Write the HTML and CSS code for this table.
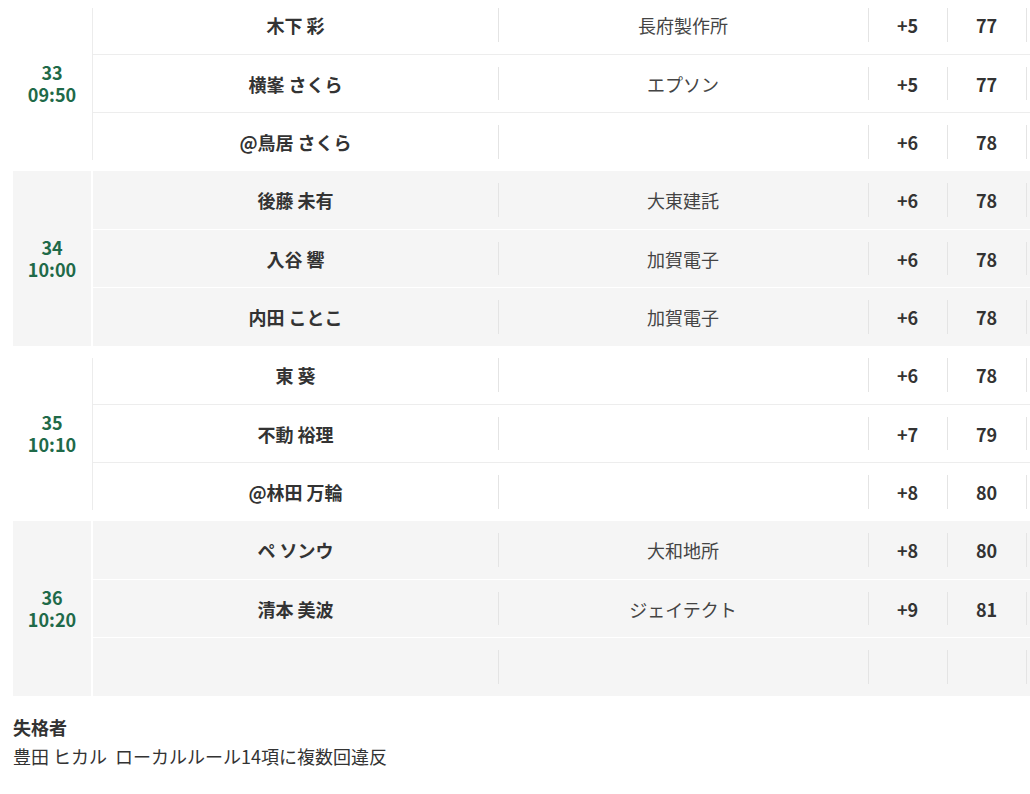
FILE: index.html
```html
<!DOCTYPE html>
<html lang="ja">
<head>
<meta charset="utf-8">
<title>組み合わせ</title>
<link rel="stylesheet" href="styles.css">
</head>
<body>
<div class="table">
  <div class="group">
    <div class="time"><span>33</span><span>09:50</span></div>
    <div class="rows">
      <div class="row"><div class="c name">木下 彩</div><div class="c co">長府製作所</div><div class="c num">+5</div><div class="c num">77</div><div class="c ex"></div></div>
      <div class="row"><div class="c name">横峯 さくら</div><div class="c co">エプソン</div><div class="c num">+5</div><div class="c num">77</div><div class="c ex"></div></div>
      <div class="row"><div class="c name">@鳥居 さくら</div><div class="c co"></div><div class="c num">+6</div><div class="c num">78</div><div class="c ex"></div></div>
    </div>
  </div>
  <div class="group alt">
    <div class="time"><span>34</span><span>10:00</span></div>
    <div class="rows">
      <div class="row"><div class="c name">後藤 未有</div><div class="c co">大東建託</div><div class="c num">+6</div><div class="c num">78</div><div class="c ex"></div></div>
      <div class="row"><div class="c name">入谷 響</div><div class="c co">加賀電子</div><div class="c num">+6</div><div class="c num">78</div><div class="c ex"></div></div>
      <div class="row"><div class="c name">内田 ことこ</div><div class="c co">加賀電子</div><div class="c num">+6</div><div class="c num">78</div><div class="c ex"></div></div>
    </div>
  </div>
  <div class="group">
    <div class="time"><span>35</span><span>10:10</span></div>
    <div class="rows">
      <div class="row"><div class="c name">東 葵</div><div class="c co"></div><div class="c num">+6</div><div class="c num">78</div><div class="c ex"></div></div>
      <div class="row"><div class="c name">不動 裕理</div><div class="c co"></div><div class="c num">+7</div><div class="c num">79</div><div class="c ex"></div></div>
      <div class="row"><div class="c name">@林田 万輪</div><div class="c co"></div><div class="c num">+8</div><div class="c num">80</div><div class="c ex"></div></div>
    </div>
  </div>
  <div class="group alt">
    <div class="time"><span>36</span><span>10:20</span></div>
    <div class="rows">
      <div class="row"><div class="c name">ペ ソンウ</div><div class="c co">大和地所</div><div class="c num">+8</div><div class="c num">80</div><div class="c ex"></div></div>
      <div class="row"><div class="c name">清本 美波</div><div class="c co">ジェイテクト</div><div class="c num">+9</div><div class="c num">81</div><div class="c ex"></div></div>
      <div class="row"><div class="c name"></div><div class="c co"></div><div class="c num"></div><div class="c num"></div><div class="c ex"></div></div>
    </div>
  </div>
</div>
<div class="dq">
  <div class="dq-title">失格者</div>
  <div class="dq-text">豊田 ヒカル<span class="reason">ローカルルール14項に複数回違反</span></div>
</div>
</body>
</html>
```

FILE: styles.css
```css
html, body {
  margin: 0;
  padding: 0;
  background: #fff;
}
body {
  padding: 0 0 0 13px;
  overflow: hidden;
  font-family: "Noto Sans CJK JP", "Noto Sans", sans-serif;
  font-size: 18px;
  color: #333;
}
.table {
  margin-top: -4px;
  width: 1017px;
}
.group {
  display: flex;
  height: 175px;
  background: #fff;
}
.group.alt {
  background: #f5f5f5;
}
.time {
  position: relative;
  width: 78px;
  flex: none;
  border-right: 2px solid #fff;
  display: flex;
  flex-direction: column;
  align-items: center;
  justify-content: center;
  padding-bottom: 2px;
  color: #1f6a49;
  font-weight: 700;
  line-height: 22px;
}
.time span {
  display: block;
  height: 22px;
}
.group:not(.alt) .time::after {
  content: "";
  position: absolute;
  right: -2px;
  top: 12px;
  bottom: 11px;
  width: 1px;
  background: #ececec;
}
.rows {
  flex: 1;
  display: flex;
  flex-direction: column;
}
.row {
  flex: 1;
  display: flex;
  align-items: stretch;
}
.row + .row {
  border-top: 1px solid #ededed;
}
.alt .row + .row {
  border-top: 1px solid #fff;
}
.c {
  position: relative;
  display: flex;
  align-items: center;
  justify-content: center;
  white-space: nowrap;
}
.c + .c::before {
  content: "";
  position: absolute;
  left: 0;
  top: 12px;
  bottom: 12px;
  width: 1px;
  background: #e4e4e4;
}
.name {
  width: 405px;
  font-weight: 700;
}
.co {
  width: 370px;
  color: #444;
}
.num {
  width: 79px;
  font-weight: 700;
}
.ex {
  flex: 1;
}
.dq {
  margin-top: 17px;
  line-height: 29px;
}
.dq-title {
  font-weight: 700;
}
.reason {
  margin-left: 8px;
}
```
